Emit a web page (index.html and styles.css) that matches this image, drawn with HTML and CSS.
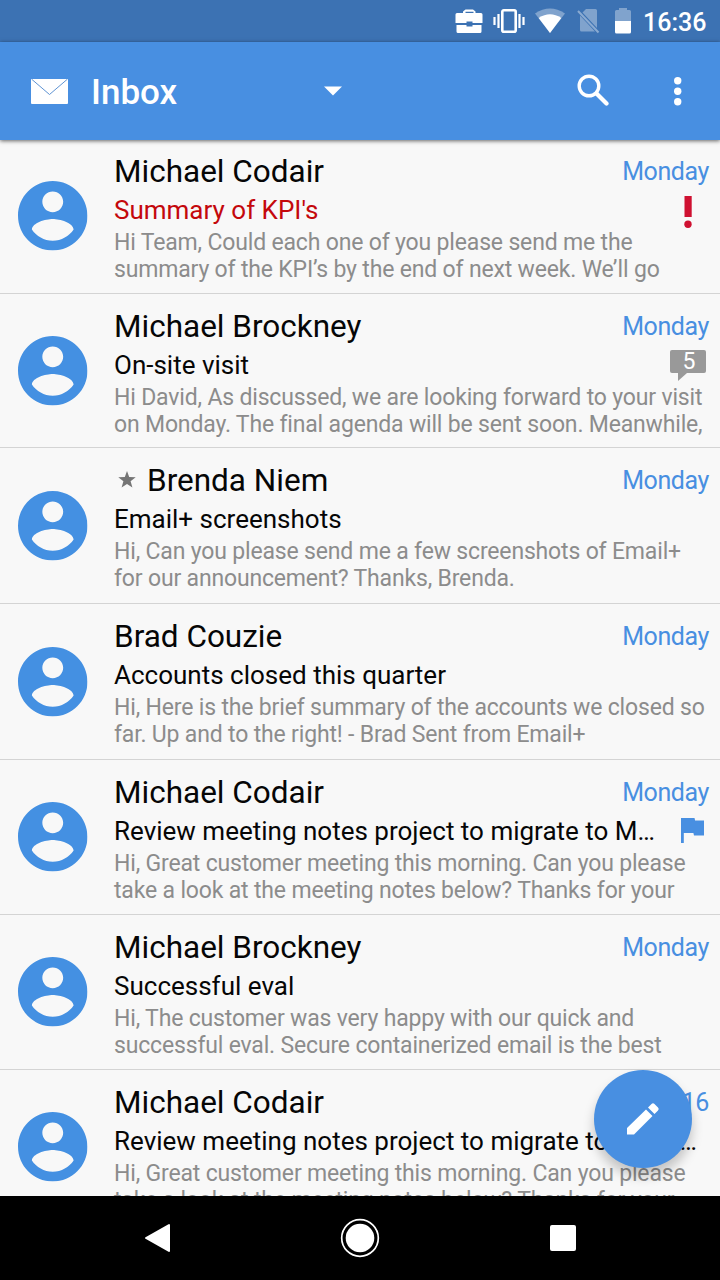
FILE: index.html
```html
<!DOCTYPE html>
<html lang="en">
<head>
<meta charset="utf-8">
<title>Inbox</title>
<link rel="stylesheet" href="styles.css">
</head>
<body>
<svg class="defs" width="0" height="0">
  <symbol id="person" viewBox="2 2 20 20"><path d="M12 2C6.480 2 2 6.480 2 12s4.480 10 10 10 10-4.480 10-10S17.520 2 12 2zm0 3c1.660 0 3 1.340 3 3s-1.340 3-3 3-3-1.340-3-3 1.340-3 3-3zm0 14.200c-2.500 0-4.710-1.280-6-3.220.03-1.990 4-3.080 6-3.080 1.990 0 5.970 1.090 6 3.080-1.290 1.940-3.500 3.220-6 3.220z"/></symbol>
</svg>
<div class="screen">
  <div class="status">
    <svg width="28" height="26" viewBox="0 0 28 26"><path fill="#fff" fill-rule="evenodd" d="M8 5V3.500L10.500 1.500h7.500L20.500 3.500V5H26q1.500 0 1.500 1.500V15H17.500v-1.500h-6V15H.500V6.500Q.500 5 2 5zM10.500 5h8V3.800h-8zM1.500 17h10v1.500h6V17h9v6.500q0 1.500-1.500 1.500H3q-1.500 0-1.500-1.500z"/></svg>
    <svg class="s-vib" width="32" height="26" viewBox="0 0 32 26"><rect x="9.300" y="2.300" width="13.400" height="21.400" rx="1.500" fill="none" stroke="#fff" stroke-width="2.600"/><path stroke="#fff" stroke-width="2.200" d="M1.500 9v8M5.500 6v14M26.500 6v14M30.500 9v8"/></svg>
    <svg class="s-wifi" width="30" height="26" viewBox="0 0 30 26"><path fill="#fff" opacity=".35" d="M0 5.500Q15-4.500 30 5.500L15 25z"/><path fill="#fff" d="M3.700 10Q15 2.500 26.300 10L15 25z"/></svg>
    <svg class="s-sim" width="24" height="26" viewBox="0 0 24 26"><path fill="#fff" opacity=".35" d="M9 1h9.500q1.500 0 1.500 1.500V20L5.500 4.500zM3 7.500l15 16H4.500Q3 23.500 3 22z"/><path stroke="#fff" opacity=".4" stroke-width="2" d="M1 3l20.500 21.500"/></svg>
    <svg class="s-bat" width="16" height="26" viewBox="0 0 16 26"><path fill="#fff" opacity=".35" d="M0 13V3.500Q0 2 1.500 2H4V0h8v2h2.500Q16 2 16 3.500V13z"/><path fill="#fff" d="M0 13h16v11q0 1.500-1.500 1.500h-13Q0 25.500 0 24z"/></svg>
    <span class="clock">16:36</span>
  </div>
  <header class="bar">
    <svg class="mail" width="37" height="25" viewBox="0 0 37 25"><rect width="37" height="25" rx="1" fill="#fff"/><path d="M1 .500 18.500 15.500 36 .500" fill="none" stroke="#5f93d3" stroke-width="1"/></svg>
    <h1 class="title">Inbox</h1>
    <svg class="caret" width="18" height="10" viewBox="0 0 18 10"><path fill="#fff" d="M0 .500h18L9 9.500z"/></svg>
    <svg class="search" width="32" height="32" viewBox="0 0 32 32"><circle cx="12" cy="12" r="9.800" fill="none" stroke="#fff" stroke-width="3.400"/><path d="M19.500 19.500 29.500 29.500" stroke="#fff" stroke-width="4.200" stroke-linecap="round"/></svg>
    <svg class="more" width="8" height="29" viewBox="0 0 8 29"><g fill="#fff"><circle cx="3.700" cy="3.700" r="3.700"/><circle cx="3.700" cy="14.300" r="3.700"/><circle cx="3.700" cy="24.800" r="3.700"/></g></svg>
  </header>
  <main class="list">
    <article class="row">
      <svg class="avatar"><use href="#person"/></svg>
      <div class="body">
        <div class="top"><span class="name">Michael Codair</span><span class="date">Monday</span></div>
        <div class="mid"><span class="subject urgent">Summary of KPI's</span><svg class="bang" width="8" height="33" viewBox="0 0 8 33"><path fill="#cf1131" d="M.500 0h7.200v21H.500z"/><circle cx="4" cy="28.300" r="3.700" fill="#cf1131"/></svg></div>
        <p class="preview">Hi Team, Could each one of you please send me the<br>summary of the KPI’s by the end of next week. We’ll go</p>
      </div>
    </article>
    <article class="row short">
      <svg class="avatar"><use href="#person"/></svg>
      <div class="body">
        <div class="top"><span class="name">Michael Brockney</span><span class="date">Monday</span></div>
        <div class="mid"><span class="subject">On-site visit</span><span class="count">5</span></div>
        <p class="preview">Hi David, As discussed, we are looking forward to your visit<br>on Monday. The final agenda will be sent soon. Meanwhile,</p>
      </div>
    </article>
    <article class="row tall">
      <svg class="avatar"><use href="#person"/></svg>
      <div class="body">
        <div class="top"><svg class="star" width="18" height="17" viewBox="0 0 18 17"><path fill="#757575" d="M9 0l2.200 6.100 6.500.2-5.100 4 1.800 6.300L9 12.900l-5.400 3.700 1.800-6.300-5.100-4 6.500-.2z"/></svg><span class="name">Brenda Niem</span><span class="date">Monday</span></div>
        <div class="mid"><span class="subject">Email+ screenshots</span></div>
        <p class="preview">Hi, Can you please send me a few screenshots of Email+<br>for our announcement? Thanks, Brenda.</p>
      </div>
    </article>
    <article class="row tall">
      <svg class="avatar"><use href="#person"/></svg>
      <div class="body">
        <div class="top"><span class="name">Brad Couzie</span><span class="date">Monday</span></div>
        <div class="mid"><span class="subject">Accounts closed this quarter</span></div>
        <p class="preview">Hi, Here is the brief summary of the accounts we closed so<br>far. Up and to the right! - Brad Sent from Email+</p>
      </div>
    </article>
    <article class="row">
      <svg class="avatar"><use href="#person"/></svg>
      <div class="body">
        <div class="top"><span class="name">Michael Codair</span><span class="date">Monday</span></div>
        <div class="mid"><span class="subject">Review meeting notes project to migrate to M…</span><svg class="flag" width="23" height="25" viewBox="0 0 23 25"><path fill="#488fe1" d="M0 0h13.500l.6 2.500H23v15H13l-.6-2.500H2.800V25H0z"/></svg></div>
        <p class="preview">Hi, Great customer meeting this morning. Can you please<br>take a look at the meeting notes below? Thanks for your</p>
      </div>
    </article>
    <article class="row">
      <svg class="avatar"><use href="#person"/></svg>
      <div class="body">
        <div class="top"><span class="name">Michael Brockney</span><span class="date">Monday</span></div>
        <div class="mid"><span class="subject">Successful eval</span></div>
        <p class="preview">Hi, The customer was very happy with our quick and<br>successful eval. Secure containerized email is the best</p>
      </div>
    </article>
    <article class="row">
      <svg class="avatar"><use href="#person"/></svg>
      <div class="body">
        <div class="top"><span class="name">Michael Codair</span><span class="date">16</span></div>
        <div class="mid"><span class="subject">Review meeting notes project to migrate to Mobil…</span></div>
        <p class="preview">Hi, Great customer meeting this morning. Can you please<br>take a look at the meeting notes below? Thanks for your</p>
      </div>
    </article>
  </main>
  <div class="fab"><svg width="34" height="34" viewBox="0 0 34 34"><path fill="#fff" d="M1 26 20 7.500 26.500 14 8 32.500H1zM22 5.500l3.500-3.500q1.500-1.500 3 0l3.500 3.500q1.500 1.500 0 3L28.500 12z"/></svg></div>
  <nav class="nav">
    <svg width="26" height="30" viewBox="0 0 26 30"><path fill="#fff" stroke="#fff" stroke-width="2" stroke-linejoin="round" d="M2 15 25 2v26z"/></svg>
    <svg width="40" height="40" viewBox="0 0 40 40"><circle cx="20" cy="20" r="18.300" fill="none" stroke="#fff" stroke-width="1.700"/><circle cx="20" cy="20" r="14.300" fill="#fff"/></svg>
    <span class="square"></span>
  </nav>
</div>
</body>
</html>
```
FILE: styles.css
```css
* { box-sizing: border-box; }
body { margin: 0; font-family: Roboto, sans-serif; background: #f8f8f8; }
svg { display: block; flex: none; }
.defs { position: absolute; }
.screen { position: relative; width: 720px; height: 1280px; overflow: hidden; display: flex; flex-direction: column; }
.status { height: 42px; flex: none; background: #3c72b3; display: flex; align-items: center; padding-left: 455px; }
.s-vib { margin-left: 10px; }
.s-wifi { margin-left: 10px; }
.s-sim { margin-left: 12px; }
.s-bat { margin-left: 14px; }
.clock { margin-left: 12px; color: #fff; font-size: 25px; font-weight: 500; line-height: 42px; margin-top: 3px; }
.bar { height: 98px; flex: none; margin-bottom: -1px; position: relative; z-index: 1; background: #488fe1; box-shadow: 0 1px 4px rgba(0,0,0,.6); display: flex; align-items: center; padding-left: 31px; }
.title { margin: 3px 0 0 23px; width: 234px; color: #fff; font-size: 35px; font-weight: 500; line-height: 40px; }
.caret { margin-left: -1px; }
.search { margin-left: 235px; margin-bottom: 2px; }
.more { margin-left: 65px; }
.list { flex: 1; min-height: 0; overflow: hidden; }
.row { height: 155px; display: flex; border-bottom: 1px solid #d4d4d4; padding-top: 13px; }
.short { height: 154px; }
.tall { height: 156px; }
.avatar { width: 69.500px; height: 69.500px; margin: 29px 26.500px 0 18px; fill: #4490e2; }
.tall .avatar { margin-top: 30px; }
.body { flex: 1; min-width: 0; white-space: nowrap; }
.top { height: 40px; display: flex; align-items: center; }
.name { font-size: 31.500px; line-height: 40px; color: #060606; }
.star { margin: -4px 11px 0 4px; }
.date { margin-left: auto; margin-right: 11px; font-size: 25px; letter-spacing: -.4px; line-height: 40px; color: #488fe1; }
.mid { height: 38px; display: flex; justify-content: space-between; }
.subject { font-size: 26px; line-height: 36px; color: #060606; }
.urgent { color: #c4080c; }
.bang { margin: 4px 28px 0 0; }
.count { position: relative; width: 36px; height: 23px; margin: 3px 14px 0 0; background: #999; border-radius: 2px; color: #fff; font-size: 23px; line-height: 24px; text-align: center; padding-left: 2px; }
.count::after { content: ""; position: absolute; left: 8px; top: 23px; border-top: 8px solid #999; border-right: 9px solid transparent; }
.flag { margin: 5px 16px 0 0; }
.preview { margin: 0; font-size: 23px; letter-spacing: -.17px; line-height: 26.700px; color: #8c8c8c; }
.fab { position: absolute; left: 594px; top: 1070px; width: 98px; height: 98px; border-radius: 50%; background: #488fe1; box-shadow: 0 8px 12px rgba(0,0,0,.22); display: flex; align-items: center; justify-content: center; }
.nav { height: 84px; flex: none; position: relative; background: #000; display: flex; align-items: center; justify-content: space-between; padding: 0 144px; }
.square { width: 26px; height: 26px; border-radius: 2px; background: #fff; }
```
